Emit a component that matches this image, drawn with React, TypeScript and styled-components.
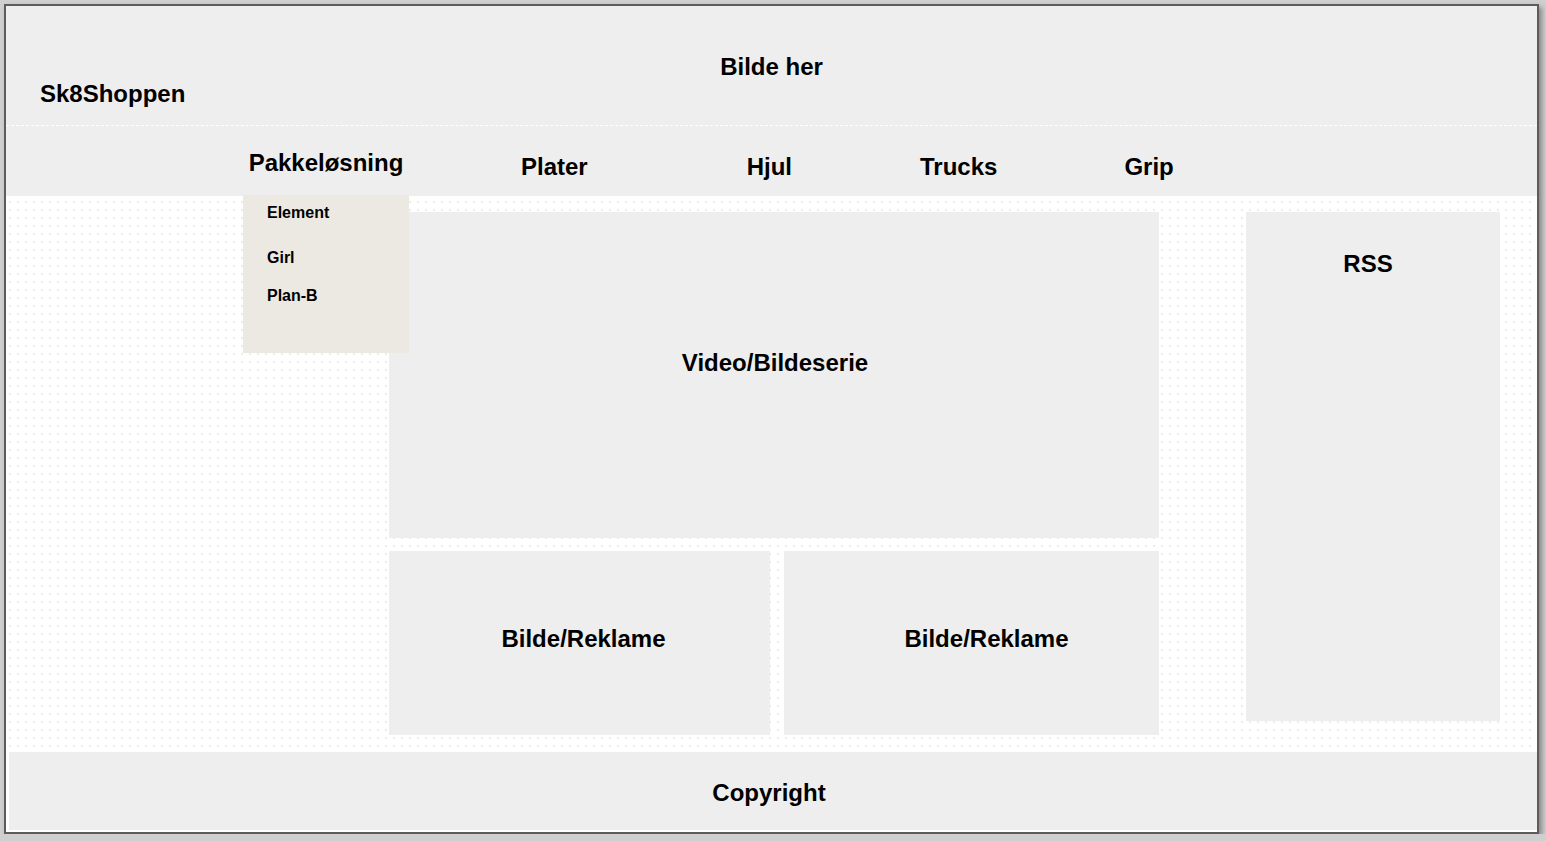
import styled, { createGlobalStyle } from 'styled-components'

const Global = createGlobalStyle`
  html, body {
    margin: 0;
    padding: 0;
    background: #cfcfcf;
    font-family: "Liberation Sans", Arial, sans-serif;
    color: #000;
  }
`

const Frame = styled.div`
  margin: 4px 0 0 4px;
  width: 1531px;
  height: 826px;
  border: 2px solid #5c5c5c;
  box-shadow: 3px 3px 5px rgba(0, 0, 0, 0.35);
  background-color: #fff;
  background-image: radial-gradient(#e4e4e4 0.6px, transparent 1px);
  background-size: 8px 8px;
  background-position: 0 0;
  display: flex;
  flex-direction: column;
`

const Header = styled.header`
  height: 119px;
  background: #eee;
  border-bottom: 1px dashed #fff;
  display: grid;
  grid-template-columns: 1fr auto 1fr;
  font-size: 24px;
  font-weight: bold;
`

const Logo = styled.div`
  align-self: end;
  padding: 0 0 18px 34px;
  line-height: 26px;
`

const Title = styled.div`
  padding-top: 48px;
  line-height: 26px;
`

const Nav = styled.nav`
  height: 70px;
  background: #eee;
  display: flex;
  padding-left: 237px;
  font-size: 24px;
  font-weight: bold;
`

const NavItem = styled.div<{ $gap?: number; $top?: number; $width?: number }>`
  position: relative;
  margin-left: ${p => p.$gap ?? 0}px;
  padding-top: ${p => p.$top ?? 28}px;
  width: ${p => (p.$width ? `${p.$width}px` : 'auto')};
  text-align: center;
  line-height: 26px;
`

const Dropdown = styled.div`
  position: absolute;
  left: 0;
  top: 69px;
  width: 166px;
  height: 158px;
  background: #ece9e3;
  text-align: left;
  font-size: 16px;
  z-index: 2;
`

const DropItem = styled.div<{ $top: number }>`
  position: absolute;
  left: 24px;
  top: ${p => p.$top}px;
  line-height: 18px;
`

const Content = styled.main`
  flex: 1;
  display: grid;
  grid-template-columns: 770px 254px;
  column-gap: 87px;
  align-items: start;
  padding: 16px 0 16px 383px;
  font-size: 24px;
  font-weight: bold;
`

const MainCol = styled.div`
  display: grid;
  grid-template-rows: 326px 184px;
  row-gap: 13px;
`

const Ads = styled.div`
  display: grid;
  grid-template-columns: 381px 375px;
  column-gap: 14px;
`

const Box = styled.div<{ $top: number; $shift?: number }>`
  background: #eee;
  text-align: center;
  padding-top: ${p => p.$top}px;
  padding-left: ${p => Math.max(0, (p.$shift ?? 0) * 2)}px;
  padding-right: ${p => Math.max(0, -(p.$shift ?? 0) * 2)}px;
  line-height: 26px;
  box-sizing: border-box;
`

const Rss = styled(Box)`
  height: 509px;
`

const Footer = styled.footer`
  height: 78px;
  margin: 0 0 2px 3px;
  background: #eee;
  display: flex;
  justify-content: center;
  padding: 28px 8px 0 0;
  box-sizing: border-box;
  font-size: 24px;
  font-weight: bold;
  line-height: 26px;
`

export default function App() {
  return (
    <>
      <Global />
      <Frame>
        <Header>
          <Logo>Sk8Shoppen</Logo>
          <Title>Bilde her</Title>
          <div />
        </Header>
        <Nav>
          <NavItem $width={166} $top={24}>
            Pakkeløsning
            <Dropdown>
              <DropItem $top={9}>Element</DropItem>
              <DropItem $top={54}>Girl</DropItem>
              <DropItem $top={92}>Plan-B</DropItem>
            </Dropdown>
          </NavItem>
          <NavItem $gap={112}>Plater</NavItem>
          <NavItem $gap={159}>Hjul</NavItem>
          <NavItem $gap={128}>Trucks</NavItem>
          <NavItem $gap={127}>Grip</NavItem>
        </Nav>
        <Content>
          <MainCol>
            <Box $top={138} $shift={1}>Video/Bildeserie</Box>
            <Ads>
              <Box $top={75} $shift={4}>Bilde/Reklame</Box>
              <Box $top={75} $shift={15}>Bilde/Reklame</Box>
            </Ads>
          </MainCol>
          <Rss $top={39} $shift={-5}>RSS</Rss>
        </Content>
        <Footer>Copyright</Footer>
      </Frame>
    </>
  )
}
